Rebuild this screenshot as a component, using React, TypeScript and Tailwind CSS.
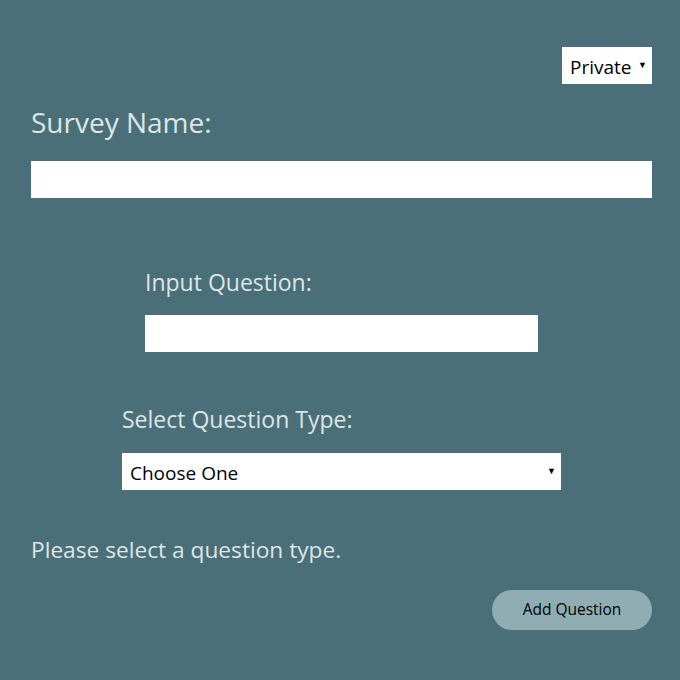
import React from "react";

function Caret() {
  return (
    <span className="pointer-events-none absolute right-[5px] top-[13px] text-[9px] leading-none text-black">▼</span>
  );
}

export default function App() {
  return (
    <div
      className="w-[680px] h-[680px] bg-[#4a6f78] flex flex-col pl-[31px] pr-[28px] text-[#dde6e6]"
      style={{ fontFamily: '"Open Sans", "Noto Sans", sans-serif' }}
    >
      <div className="relative self-end mt-[47px] w-[90px] h-[37px] bg-white">
        <select className="appearance-none w-full h-full bg-white text-black text-[19px] pl-[8px] pt-[3px] outline-none">
          <option>Private</option>
        </select>
        <Caret />
      </div>

      <label className="mt-[19px] text-[28px] leading-[38px]">Survey Name:</label>
      <input className="mt-[20px] w-full h-[37px] bg-white outline-none" />

      <label className="mt-[69px] ml-[114px] text-[23px] leading-[31px]">Input Question:</label>
      <input className="mt-[17px] ml-[114px] w-[393px] h-[37px] bg-white outline-none" />

      <label className="mt-[52px] ml-[91px] text-[23px] leading-[31px]">Select Question Type:</label>
      <div className="relative mt-[18px] ml-[91px] w-[439px] h-[37px] bg-white">
        <select className="appearance-none w-full h-full bg-white text-black text-[19px] pl-[8px] pt-[3px] outline-none">
          <option>Choose One</option>
        </select>
        <Caret />
      </div>

      <p className="mt-[44px] text-[22.7px] leading-[31px]">Please select a question type.</p>

      <button className="self-end mt-[25px] w-[160px] h-[40px] rounded-full bg-[#90adb3] text-black text-[15.5px]">
        Add Question
      </button>
    </div>
  );
}
